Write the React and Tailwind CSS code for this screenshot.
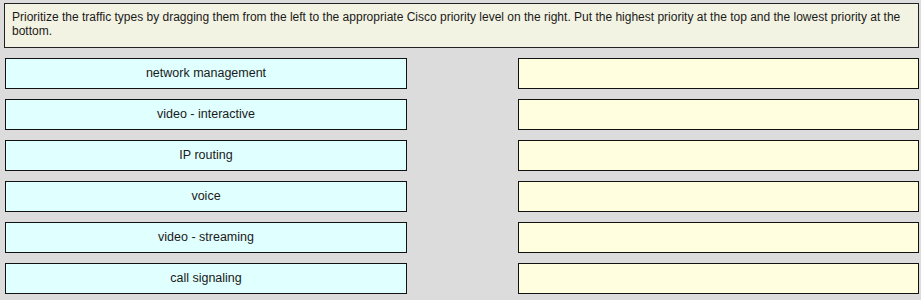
import React from 'react'

const items = [
  'network management',
  'video - interactive',
  'IP routing',
  'voice',
  'video - streaming',
  'call signaling'
]

const App = () => {
  return (
    <div className="w-[921px] h-[300px] bg-[#dcdcdc] pt-[3px] pl-[4px] pr-[2px] font-['Liberation_Sans',Arial,sans-serif] text-[#1a1a1a]">
      <div className="h-[45px] border border-[#222] bg-[#f3f3e3] px-[7px] pt-[6px] text-[12px] leading-[14px]">
        Prioritize the traffic types by dragging them from the left to the appropriate Cisco priority level on the right. Put the highest priority at the top and the lowest priority at the bottom.
      </div>
      <div className="flex justify-between mt-[10px] pl-[1px]">
        <div className="flex flex-col gap-[10px] w-[402px]">
          {items.map((item) => (
            <div key={item} className="h-[31px] border border-[#111] bg-[#e0ffff] flex items-center justify-center text-[12.5px]">
              {item}
            </div>
          ))}
        </div>
        <div className="flex flex-col gap-[10px] w-[401px]">
          {items.map((item) => (
            <div key={item} className="h-[31px] border border-[#111] bg-[#ffffe0]"></div>
          ))}
        </div>
      </div>
    </div>
  )
}

export default App
